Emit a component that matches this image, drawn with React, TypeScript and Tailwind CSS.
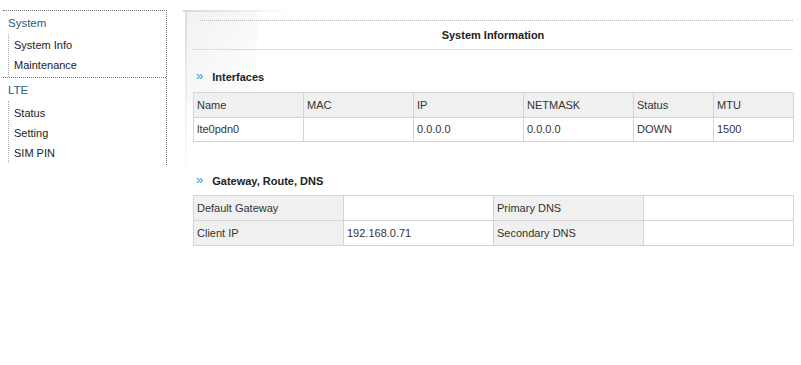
import React from "react";

const menu = [
  { title: "System", items: ["System Info", "Maintenance"] },
  { title: "LTE", items: ["Status", "Setting", "SIM PIN"] },
];

const ifCols = [
  { label: "Name", w: "w-[110px]" },
  { label: "MAC", w: "w-[110px]" },
  { label: "IP", w: "w-[110px]" },
  { label: "NETMASK", w: "w-[110px]" },
  { label: "Status", w: "w-[80px]" },
  { label: "MTU", w: "w-[80px]" },
];
const ifRow = ["lte0pdn0", "", "0.0.0.0", "0.0.0.0", "DOWN", "1500"];

const cell = "border border-[#d4d4d4] px-[3px] text-left font-normal align-middle";

function SectionTitle({ text }: { text: string }) {
  return (
    <div className="flex items-center h-[18px] pl-[3px] gap-[9px]">
      <span className="text-[#2a9fc9] text-[13px] leading-none -mt-[3px]">»</span>
      <span className="font-bold text-[11px] text-[#222]">{text}</span>
    </div>
  );
}

export default function App() {
  return (
    <div className="w-[801px] h-[365px] bg-white flex font-['Liberation_Sans',Arial,sans-serif] text-[11px] text-[#333]">
      {/* Sidebar */}
      <div className="pt-[10px] pl-[3px] w-[167px] shrink-0">
        <div className="border-t border-r border-dotted border-[#777] pb-[2px]">
          {menu.map((g, i) => (
            <div key={g.title} className={i > 0 ? "border-t border-dotted border-[#777]" : ""}>
              <div className="pl-[5px] mt-[1px] h-[22px] flex items-center translate-y-[1px] text-[#1f5d7b] text-[11.5px]">
                {g.title}
              </div>
              <div className={`ml-[5px] border-l border-dotted border-[#aaa] ${i === 0 ? "pt-[1px] pb-[2px]" : "pt-[2px]"}`}>
                {g.items.map((it) => (
                  <div key={it} className="pl-[5px] h-[20px] flex items-center text-[#222]">
                    {it}
                  </div>
                ))}
              </div>
            </div>
          ))}
        </div>
      </div>

      {/* Main panel */}
      <div className="relative ml-[16px] mt-[10px] w-[610px] pl-[10px]">
        <div className="absolute left-0 top-0 w-[110px] h-[2px] bg-gradient-to-r from-[#d8d8d8] to-transparent" />
        <div className="absolute left-[2px] top-0 w-[2px] h-[170px] bg-gradient-to-b from-[#dcdcdc] to-transparent" />
        <div className="absolute left-[4px] top-[2px] w-[70px] h-[90px] bg-gradient-to-br from-[#f2f2f2] to-transparent" />

        <div className="relative mt-[10px] border-t border-dotted border-[#bbb] ml-[7px]" />
        <div className="relative h-[28px] flex items-center justify-center font-bold text-[11px] text-[#222]">
          System Information
        </div>
        <div className="relative border-t border-[#ddd]" />

        <div className="relative mt-[18px]">
          <SectionTitle text="Interfaces" />
        </div>
        <table className="relative mt-[6px] border-collapse w-[601px] table-fixed">
          <thead>
            <tr className="bg-[#f0f0f0]">
              {ifCols.map((c) => (
                <th key={c.label} className={`${cell} h-[24.5px] ${c.w}`}>{c.label}</th>
              ))}
            </tr>
          </thead>
          <tbody>
            <tr>
              {ifRow.map((v, i) => (
                <td key={i} className={`${cell} h-[24.5px]`}>{v}</td>
              ))}
            </tr>
          </tbody>
        </table>

        <div className="relative mt-[30px]">
          <SectionTitle text="Gateway, Route, DNS" />
        </div>
        <table className="relative mt-[5px] border-collapse w-[601px] table-fixed">
          <tbody>
            <tr>
              <td className={`${cell} h-[25px] w-[150px] bg-[#f0f0f0]`}>Default Gateway</td>
              <td className={`${cell} h-[25px] w-[150px]`}></td>
              <td className={`${cell} h-[25px] w-[150px] bg-[#f0f0f0]`}>Primary DNS</td>
              <td className={`${cell} h-[25px] w-[150px]`}></td>
            </tr>
            <tr>
              <td className={`${cell} h-[25px] bg-[#f0f0f0]`}>Client IP</td>
              <td className={`${cell} h-[25px]`}>192.168.0.71</td>
              <td className={`${cell} h-[25px] bg-[#f0f0f0]`}>Secondary DNS</td>
              <td className={`${cell} h-[25px]`}></td>
            </tr>
          </tbody>
        </table>
      </div>
    </div>
  );
}
